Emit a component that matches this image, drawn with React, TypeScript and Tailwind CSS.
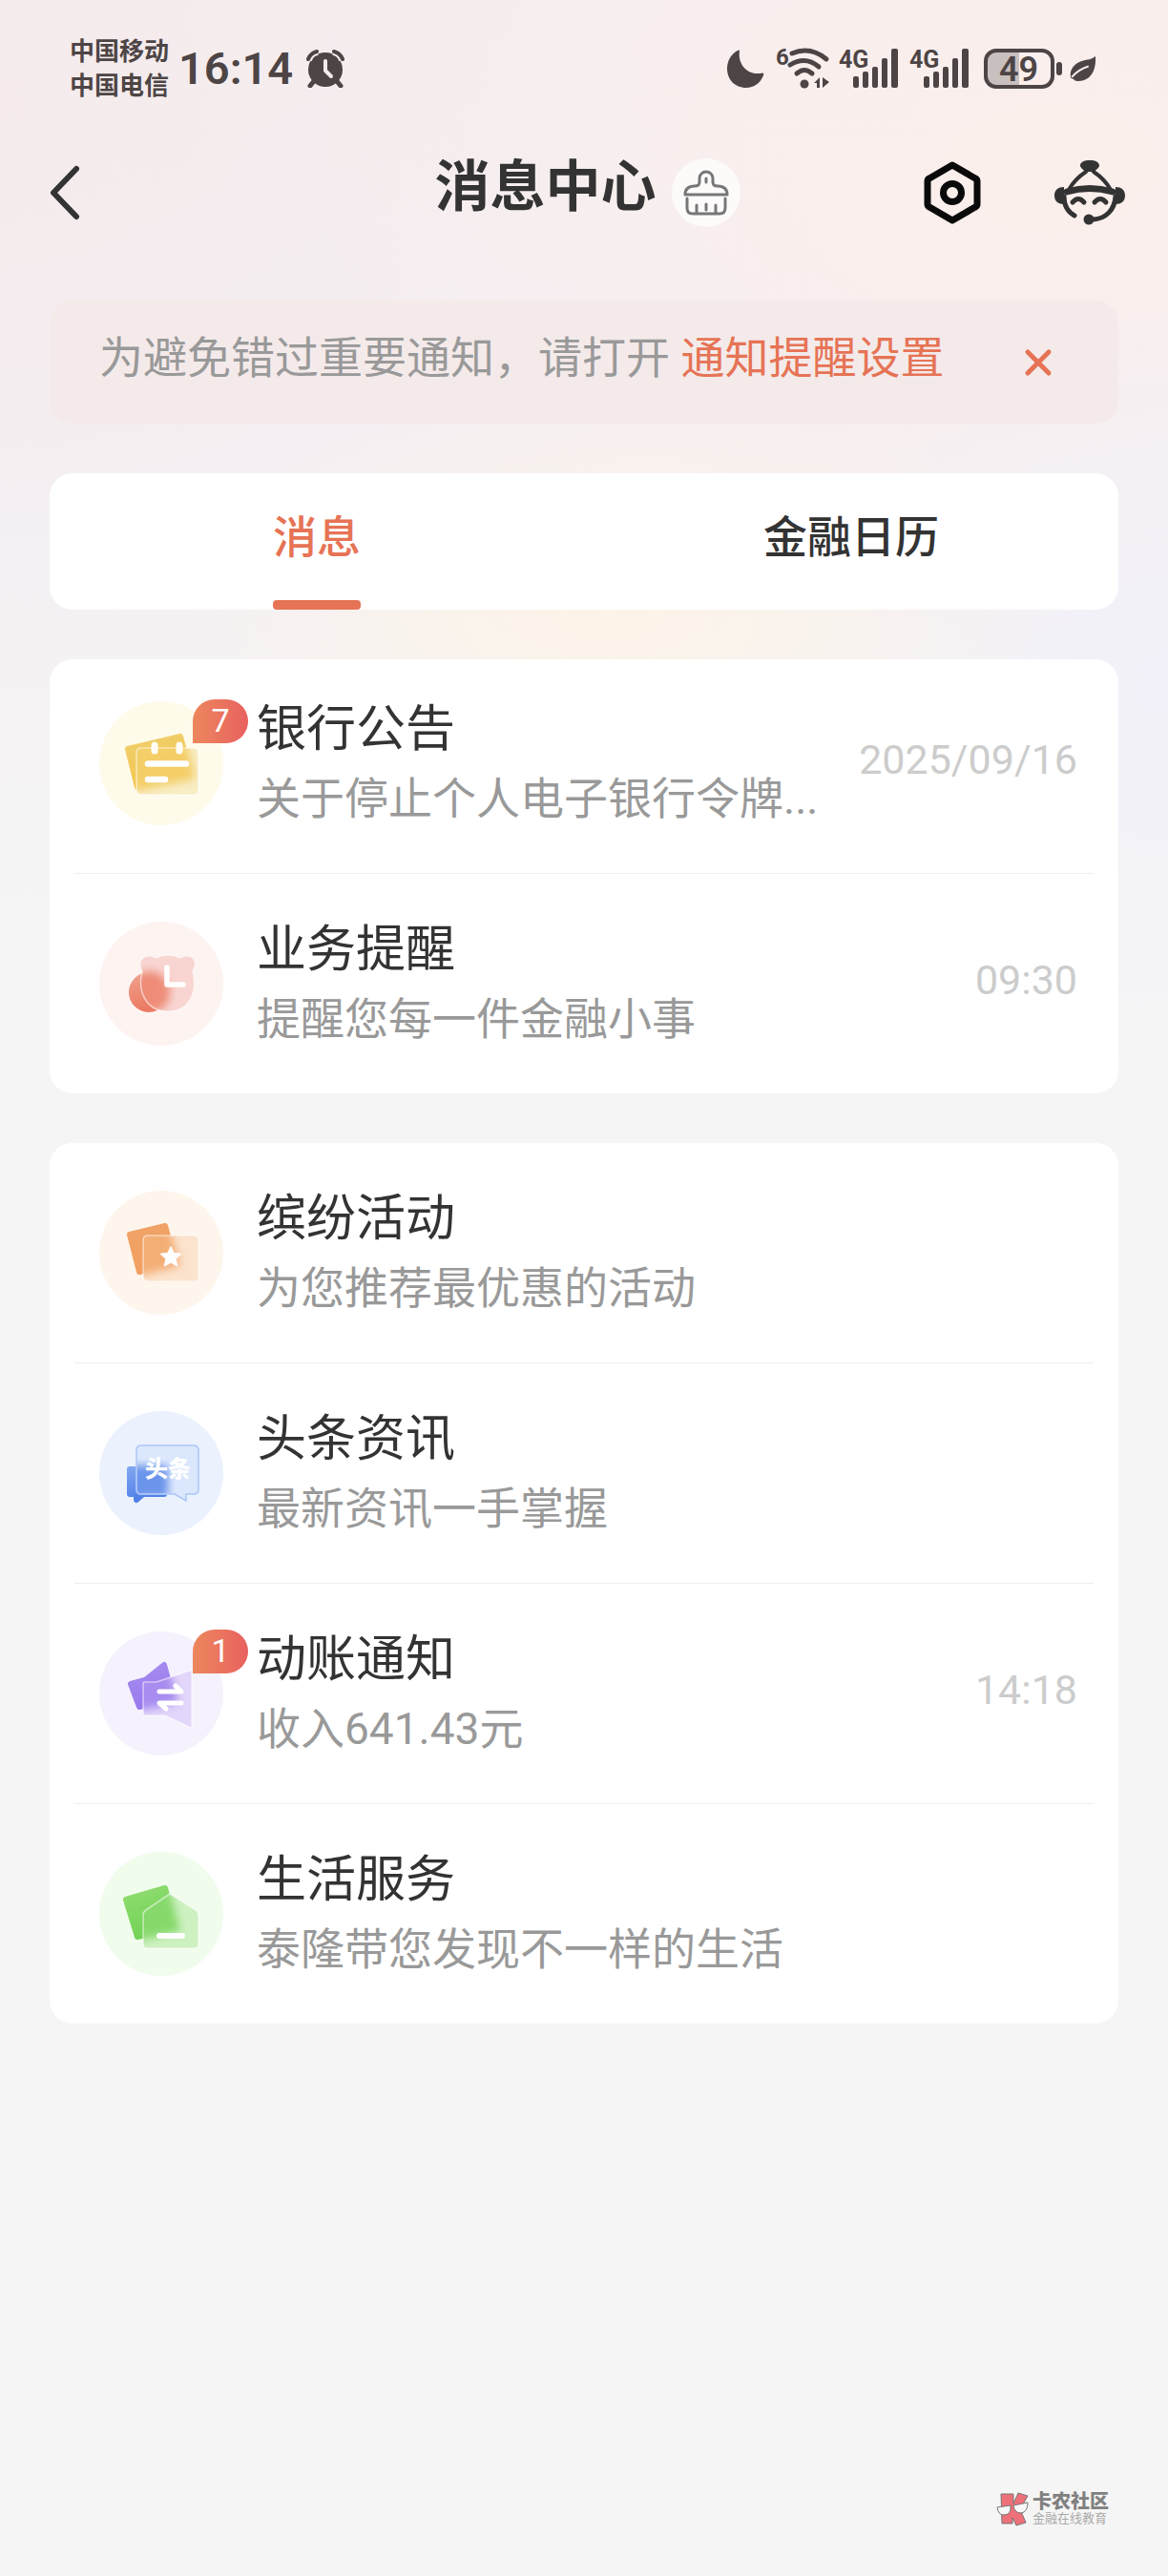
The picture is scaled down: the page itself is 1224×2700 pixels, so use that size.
import { useState, type ReactNode } from "react"

type GlassIconProps = {
    id: string
    disc: string
    back: string
    front: string
    from: string
    to: string
    pale: string
    children: ReactNode
}

/* A solid shape behind a frosted one, on a tinted disc */
const GlassIcon = ({ id, disc, back, front, from, to, pale, children }: GlassIconProps) => (
    <svg viewBox="0 0 130 130" className="size-full" fill="none" aria-hidden="true">
        <defs>
            <linearGradient id={`${id}-fill`} x1="0" y1="0" x2="0.3" y2="1">
                <stop offset="0" stopColor={from} />
                <stop offset="1" stopColor={to} />
            </linearGradient>
            <filter id={`${id}-blur`} x="-30%" y="-30%" width="160%" height="160%">
                <feGaussianBlur stdDeviation="4.5" />
            </filter>
            <clipPath id={`${id}-clip`}>
                <path d={front} />
            </clipPath>
        </defs>
        <circle cx="65" cy="65" r="65" fill={disc} />
        <path d={back} fill={`url(#${id}-fill)`} stroke={`url(#${id}-fill)`} strokeWidth="6" strokeLinejoin="round" />
        <path d={front} fill={pale} />
        <g clipPath={`url(#${id}-clip)`}>
            <path
                d={back}
                fill={to}
                stroke={to}
                strokeWidth="8"
                strokeLinejoin="round"
                opacity="0.8"
                filter={`url(#${id}-blur)`}
            />
        </g>
        <path d={front} stroke="#fff" strokeOpacity="0.5" strokeWidth="1.6" strokeLinejoin="round" />
        {children}
    </svg>
)

const NoticeIcon = () => (
    <GlassIcon
        id="notice"
        disc="#fffbeb"
        from="#f0cf6c"
        to="#f3c64f"
        pale="#f8edc4"
        back="M30 50 85 37 96 78 40 90Z"
        front="M44 49H99Q104 49 104 54V93Q104 98 99 98H44Q39 98 39 93V54Q39 49 44 49Z"
    >
        <path d="M58 46v6M84 46v6" stroke="#fffdf5" strokeWidth="7" strokeLinecap="round" />
        <path d="M51 65.500H91M51 82H69" stroke="#fff" strokeWidth="6.500" strokeLinecap="round" />
    </GlassIcon>
)

const ReminderIcon = () => (
    <GlassIcon
        id="reminder"
        disc="#fdf3f1"
        from="#f0a08c"
        to="#eb7a62"
        pale="#f8d5d1"
        back="M34 74a18 18 0 1 1 36 0a18 18 0 1 1-36 0Z"
        front="M45 52C40 44 44 36 52 36C56 36 58 37 60 38C68 34 76 34 84 38C86 37 88 36 92 36C100 36 103 44 98 52C103 72 96 94 72 94C48 94 40 72 45 52Z"
    >
        <path d="M71 48V66H88" stroke="#fff" strokeWidth="5.500" strokeLinecap="round" strokeLinejoin="round" />
    </GlassIcon>
)

const ActivityIcon = () => (
    <GlassIcon
        id="activity"
        disc="#fef5ec"
        from="#f0a267"
        to="#f2a060"
        pale="#fbe3cd"
        back="M32 46 69 37 80 76 42 85Z"
        front="M51 47H99Q104 47 104 52V90Q104 95 99 95H51Q46 95 46 90V52Q46 47 51 47Z"
    >
        <path d="M75 59l3 6.500 7.300.8-5.400 5 1.500 7.200-6.400-3.600-6.400 3.600 1.500-7.200-5.400-5 7.300-.8Z" fill="#fff" stroke="#fff" strokeWidth="1.500" strokeLinejoin="round" />
    </GlassIcon>
)

const HeadlineIcon = () => (
    <GlassIcon
        id="headline"
        disc="#ebf2fe"
        from="#7ea4f2"
        to="#4f80e6"
        pale="#dbe7fd"
        back="M32 61H68V87H46L39 93V87H32Z"
        front="M44 36H99Q104 36 104 41V82Q104 87 99 87H91V94L79 87H44Q39 87 39 82V41Q39 36 44 36Z"
    >
        <path d="M44 36H99Q104 36 104 41V82Q104 87 99 87H91V94L79 87H44Q39 87 39 82V41Q39 36 44 36Z" stroke="#a9c3f6" strokeWidth="1.500" />
        <text x="48" y="69" fill="#fff" className="font-['Noto_Sans_CJK_SC',sans-serif] text-[24px] font-black">
            头条
        </text>
    </GlassIcon>
)

const TransferIcon = () => (
    <GlassIcon
        id="transfer"
        disc="#f5f2fe"
        from="#a68df0"
        to="#9a7aee"
        pale="#e2d6fa"
        back="M33 55 48 51 68 35 78 72 42 79Z"
        front="M47 53H60L95 41Q97 41 97 43V99Q97 102 94 100L69 88H48Q46 88 46 86V54Z"
    >
        <path d="M63 63H86L80 57M86 75H63L70 81" stroke="#fff" strokeWidth="5" strokeLinecap="round" strokeLinejoin="round" />
    </GlassIcon>
)

const LifeIcon = () => (
    <GlassIcon
        id="life"
        disc="#f0fcec"
        from="#8fdc70"
        to="#74d356"
        pale="#cdf1c1"
        back="M28 50 69 38 80 80 40 89Z"
        front="M74 44 101 61Q104 63 104 66V97Q104 101 100 101H50Q46 101 46 97V66Q46 63 49 61Z"
    >
        <path d="M63 88H87" stroke="#fff" strokeWidth="6" strokeLinecap="round" />
    </GlassIcon>
)

type Message = {
    title: string
    summary: string
    time?: string
    unread?: number
    icon: ReactNode
}

const BANK_MESSAGES: Message[] = [
    { title: "银行公告", summary: "关于停止个人电子银行令牌...", time: "2025/09/16", unread: 7, icon: <NoticeIcon /> },
    { title: "业务提醒", summary: "提醒您每一件金融小事", time: "09:30", icon: <ReminderIcon /> },
]

const SERVICE_MESSAGES: Message[] = [
    { title: "缤纷活动", summary: "为您推荐最优惠的活动", icon: <ActivityIcon /> },
    { title: "头条资讯", summary: "最新资讯一手掌握", icon: <HeadlineIcon /> },
    { title: "动账通知", summary: "收入641.43元", time: "14:18", unread: 1, icon: <TransferIcon /> },
    { title: "生活服务", summary: "泰隆带您发现不一样的生活", icon: <LifeIcon /> },
]

const SignalIcon = () => (
    <svg viewBox="0 -6 64 54" className="h-[54px] w-16" fill="currentColor" aria-hidden="true">
        <text x="0" y="20" className="font-['Roboto',sans-serif] text-[25px] font-bold">
            4G
        </text>
        <rect x="15" y="29" width="6" height="12" rx="2" />
        <rect x="25" y="24" width="6" height="17" rx="2" />
        <rect x="35" y="19" width="6" height="22" rx="2" />
        <rect x="45" y="10" width="6" height="31" rx="2" />
        <rect x="55" y="0" width="7" height="41" rx="2" />
    </svg>
)

const StatusBar = () => (
    <div className="flex items-center justify-between pt-9 pr-[75px] pl-[73px] text-[#4d4545]">
        <div className="flex items-center">
            <div className="text-[26px] leading-9 font-bold">
                <p>中国移动</p>
                <p>中国电信</p>
            </div>
            <span className="ml-2.5 font-['Roboto',sans-serif] text-[47px] leading-[72px] font-semibold">16:14</span>
            <svg viewBox="0 0 40 40" className="ml-3.5 size-10" fill="none" aria-hidden="true">
                <circle cx="20" cy="21" r="18" fill="currentColor" />
                <path d="M2 11Q4 3 12 2M38 11Q36 3 28 2" stroke="#f6ebeb" strokeWidth="8" />
                <path d="M2 10Q4 4 11 2M38 10Q36 4 29 2" stroke="currentColor" strokeWidth="4" strokeLinecap="round" />
                <path d="M8 33 4 38M32 33 36 38" stroke="currentColor" strokeWidth="5" strokeLinecap="round" />
                <path d="M20 12V22L26 28" stroke="#f6ebeb" strokeWidth="4" strokeLinecap="round" strokeLinejoin="round" />
            </svg>
        </div>
        <div className="flex items-center">
            <svg viewBox="0 0 40 40" className="size-10" fill="currentColor" aria-hidden="true">
                <path d="M14 1.500C12 14 21 28 38 24.500Q40 25 39 27C36 35 29 40 21 40C9 40 1 31 1 20C1 11 6 4 12 1Q14 0 14 1.500Z" />
            </svg>
            <svg viewBox="0 -6 58 56" className="ml-3 h-14 w-[58px]" fill="none" aria-hidden="true">
                <text x="0" y="18" fill="currentColor" className="font-['Roboto',sans-serif] text-[24px] font-bold">
                    6
                </text>
                <path d="M17 6Q36-2 53 12M15 18Q31 8 45 20M22 27Q30 20 38 27" stroke="currentColor" strokeWidth="5" strokeLinecap="round" />
                <circle cx="30" cy="38" r="4.500" fill="currentColor" />
                <path d="M46 31V42H43V37H40ZM49 31V42L56 36Z" fill="currentColor" />
            </svg>
            <span className="ml-2 flex gap-2.5">
                <SignalIcon />
                <SignalIcon />
            </span>
            <svg viewBox="0 0 84 42" className="ml-3.5 h-[42px] w-[84px]" fill="none" aria-hidden="true">
                <path d="M12 2H37V40H12Q2 40 2 30V12Q2 2 12 2Z" fill="#c8bfbf" />
                <rect x="2" y="2" width="70" height="38" rx="11" stroke="currentColor" strokeWidth="4" />
                <rect x="76" y="14" width="6" height="14" rx="3" fill="currentColor" />
                <text x="16" y="34" fill="currentColor" className="font-['Roboto',sans-serif] text-[36px] font-semibold">
                    49
                </text>
            </svg>
            <svg viewBox="0 0 27 27" className="ml-1.5 size-7" aria-hidden="true">
                <path d="M26 1C27 14 22 26 9 26Q5 26 4 24L1 23C-1 10 10 5 20 4Q24 3 26 1Z" fill="currentColor" />
                <path d="M2 22Q9 14 19 11" stroke="#faeeec" strokeWidth="2" fill="none" />
            </svg>
        </div>
    </div>
)

const Header = () => (
    <header className="grid grid-cols-[1fr_auto_1fr] items-center pt-[54px] pr-[45px] pl-[52px]">
        <button type="button" aria-label="返回" className="w-fit">
            <svg viewBox="0 0 32 58" className="h-[58px] w-8" fill="none" aria-hidden="true">
                <path d="M28 4 4 29 28 54" stroke="#333" strokeWidth="6" strokeLinecap="round" strokeLinejoin="round" />
            </svg>
        </button>
        <div className="flex items-center gap-4">
            <h1 className="pb-3 text-[58px] leading-[68px] font-bold text-[#333]">消息中心</h1>
            <button type="button" aria-label="清除未读" className="rounded-full bg-white/70">
                <svg viewBox="0 0 72 72" className="size-[72px]" fill="none" stroke="#777" strokeWidth="3" strokeLinecap="round" strokeLinejoin="round" aria-hidden="true">
                    <path d="M14 38C14 31 18 29 24 29Q29 29 29 25V21A7 7 0 0 1 43 21V25Q43 29 48 29C54 29 58 31 58 38Z" />
                    <path d="M16 42V52Q16 58 22 58H50Q56 58 56 52V42M26 49V57M36 48V54M46 49V57M36 21V25" />
                </svg>
            </button>
        </div>
        <div className="flex items-center justify-end gap-[76px]">
            <button type="button" aria-label="设置">
                <svg viewBox="0 0 62 68" className="h-[68px] w-[62px]" fill="none" stroke="#0a0a0a" strokeWidth="7" strokeLinejoin="round" aria-hidden="true">
                    <path d="M31 5 55 19Q57 20 57 22V46Q57 48 55 49L31 63 7 49Q5 48 5 46V22Q5 20 7 19Z" />
                    <circle cx="31" cy="34" r="9.500" />
                </svg>
            </button>
            <button type="button" aria-label="客服">
                <svg viewBox="0 0 74 68" className="h-[68px] w-[74px]" fill="none" stroke="#333" strokeWidth="5" strokeLinecap="round" aria-hidden="true">
                    <path d="M37 0C43 0 47 2 47 5.500C47 8 43 10 42 12H32C31 10 27 8 27 5.500C27 2 31 0 37 0Z" fill="#333" stroke="none" />
                    <path d="M33 12Q21 20 15 31M41 12Q53 20 59 31" strokeWidth="4" />
                    <path d="M13 33Q37 26 61 33" strokeWidth="7" />
                    <path d="M10 38C10 47 14 54 21 58M64 38C63 52 54 61 41 62" />
                    <path d="M10 28V46C4 46 0 43 0 37S4 28 10 28ZM64 28V46C70 46 74 43 74 37S70 28 64 28Z" fill="#333" stroke="none" />
                    <path d="M19 44Q25 37 31 44M42 44Q48 37 54 44" />
                    <circle cx="36" cy="62" r="5.500" fill="#333" stroke="none" />
                </svg>
            </button>
        </div>
    </header>
)

const MessageRow = ({ message }: { message: Message }) => (
    <li className="border-t border-[#efefef] py-[50px] pr-[17px] pl-[26px] first:border-t-0">
        <a href="#" className="flex items-center gap-[35px]">
            <span className="relative size-[130px] shrink-0">
                {message.icon}
                {message.unread && (
                    <span className="absolute -top-0.5 left-[98px] flex h-[46px] w-[58px] items-center justify-center rounded-3xl rounded-bl-none bg-linear-to-r from-[#ec875d] to-[#e8605f] pb-0.5 font-['Roboto',sans-serif] text-[34px] leading-10 text-white">
                        {message.unread}
                    </span>
                )}
            </span>
            <span className="flex h-[130px] min-w-0 flex-1 flex-col justify-between">
                <span className="text-[52px] leading-[60px] text-[#333]">{message.title}</span>
                <span className="truncate text-[46px] leading-[56px] text-[#999]">{message.summary}</span>
            </span>
            {message.time && (
                <time className="shrink-0 pb-2 text-[43px] leading-[52px] text-[#ccc]">{message.time}</time>
            )}
        </a>
    </li>
)

const MessageList = ({ messages, className = "" }: { messages: Message[]; className?: string }) => (
    <ul className={`rounded-3xl bg-white px-[26px] ${className}`}>
        {messages.map((message) => (
            <MessageRow key={message.title} message={message} />
        ))}
    </ul>
)

const TABS = ["消息", "金融日历"]

const App = () => {
    const [activeTab, setActiveTab] = useState(TABS[0])
    const [isNoticeOpen, setIsNoticeOpen] = useState(true)

    return (
        <div className="flex min-h-screen flex-col bg-[#f5f5f5] bg-[radial-gradient(460px_240px_at_52%_640px,#fdf4e8,transparent),radial-gradient(360px_420px_at_100%_720px,#f2f1f9,transparent),radial-gradient(800px_500px_at_90%_180px,#fbefeb,transparent),radial-gradient(600px_500px_at_0%_100px,#f5ebec,transparent),linear-gradient(#f5edef,#f4eff3_450px,#f5f5f5_1000px)] font-['Roboto','Noto_Sans_CJK_SC',sans-serif]">
            <StatusBar />
            <Header />

            <main className="flex flex-col gap-[52px] px-[52px] pt-[73px]">
                {isNoticeOpen && (
                    <section className="flex items-center justify-between rounded-3xl bg-[#f4eaea] pt-7 pr-[68px] pb-9 pl-[52px] text-[46px] leading-[65px] text-[#999]">
                        <p>
                            为避免错过重要通知，请打开{" "}
                            <a href="#" className="text-[#e67355]">
                                通知提醒设置
                            </a>
                        </p>
                        <button type="button" aria-label="关闭" onClick={() => setIsNoticeOpen(false)} className="pt-2">
                            <svg viewBox="0 0 32 32" className="size-8" fill="none" aria-hidden="true">
                                <path d="M5 5 27 27M27 5 5 27" stroke="#e67355" strokeWidth="5" strokeLinecap="round" />
                            </svg>
                        </button>
                    </section>
                )}

                <div role="tablist" className="grid grid-cols-2 rounded-3xl bg-white">
                    {TABS.map((tab) => (
                        <button
                            key={tab}
                            type="button"
                            role="tab"
                            aria-selected={activeTab === tab}
                            onClick={() => setActiveTab(tab)}
                            className={`flex flex-col items-center pt-[34px] text-[46px] leading-[66px] font-medium ${activeTab === tab ? "text-[#e67355]" : "text-[#333]"}`}
                        >
                            {tab}
                            <span className={`mt-[33px] h-2.5 w-[92px] rounded-sm ${activeTab === tab ? "bg-[#e67355]" : ""}`} />
                        </button>
                    ))}
                </div>

                <MessageList messages={BANK_MESSAGES} className="[&>li:first-child]:pt-[44px]" />
                <MessageList messages={SERVICE_MESSAGES} />
            </main>

            <footer className="mt-auto flex items-center justify-end gap-1 pr-[62px] pb-[52px] text-[#808080]">
                <svg viewBox="0 0 34 36" className="h-9 w-[34px]" stroke="#777" strokeWidth="1" aria-hidden="true">
                    <path d="M5 2H18V12L23 1 33 4 25 18 31 32 21 35 17 27V33H6Z" fill="#ee7078" />
                    <path d="M1 16 15 14Q16 24 8 24Q2 24 1 16ZM18 14 33 11Q33 21 26 22Q19 22 18 14Z" fill="#f8f8f8" />
                </svg>
                <div>
                    <p className="text-[20px] leading-5 font-black">卡农社区</p>
                    <p className="text-[13px] leading-4 text-[#aaa]">金融在线教育</p>
                </div>
            </footer>
        </div>
    )
}

export default App
